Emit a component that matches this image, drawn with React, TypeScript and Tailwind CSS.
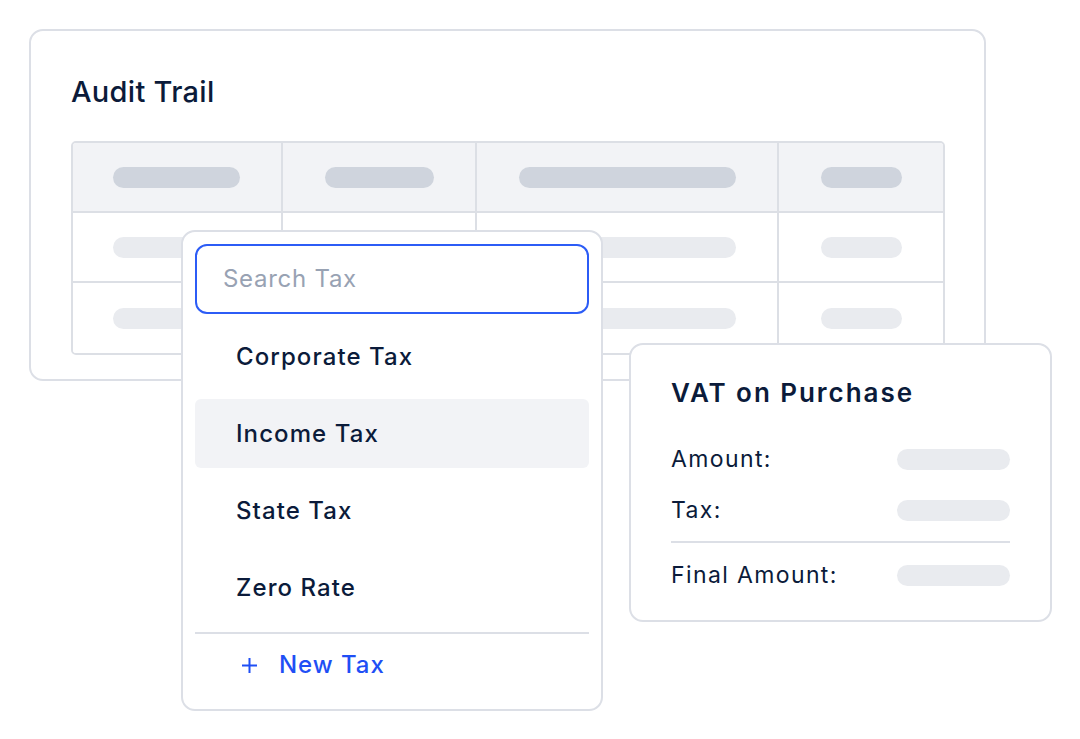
import React from "react";

const font = { fontFamily: "Inter, 'Noto Sans', sans-serif" };

function Pill({ w, dark }: { w: string; dark?: boolean }) {
  return <div className={`h-[21px] rounded-full ${w} ${dark ? "bg-[#cfd4dd]" : "bg-[#e9ebef]"}`} />;
}

function TableRow({ header, last }: { header?: boolean; last?: boolean }) {
  const rowCls = `flex h-[70px] ${header ? "bg-[#f2f3f6]" : "bg-white"} ${last ? "" : "border-b-2 border-[#dcdfe5]"}`;
  return (
    <div className={rowCls}>
      <div className="flex w-[210px] shrink-0 items-center border-r-2 border-[#dcdfe5] pl-[40px]">
        <Pill w="w-[127px]" dark={header} />
      </div>
      <div className="flex w-[194px] shrink-0 items-center border-r-2 border-[#dcdfe5] pl-[42px]">
        <Pill w="w-[109px]" dark={header} />
      </div>
      <div className="flex w-[302px] shrink-0 items-center border-r-2 border-[#dcdfe5] pl-[42px]">
        <Pill w="w-[217px]" dark={header} />
      </div>
      <div className="flex flex-1 items-center pl-[42px]">
        <Pill w="w-[81px]" dark={header} />
      </div>
    </div>
  );
}

export default function App() {
  return (
    <div className="relative h-[739px] w-[1080px] overflow-hidden bg-white text-[#0b1b3a]" style={font}>
      {/* Audit Trail card */}
      <div className="absolute left-[29px] top-[29px] flex h-[352px] w-[957px] flex-col rounded-[14px] border-2 border-[#dcdfe6] bg-white px-[40px] pt-[43px]">
        <h2 className="text-[29px] font-medium leading-[36px] tracking-[0.01em]">Audit Trail</h2>
        <div className="mt-[31px] w-[874px] overflow-hidden rounded-[5px] border-2 border-[#dcdfe5]">
          <TableRow header />
          <TableRow />
          <TableRow last />
        </div>
      </div>

      {/* Tax dropdown */}
      <div className="absolute left-[181px] top-[230px] z-10 flex w-[422px] flex-col rounded-[14px] border-2 border-[#dcdfe6] bg-white px-[12px] pb-[13px] pt-[12px]">
        <div className="flex flex-col gap-[8px]">
          <div className="flex h-[70px] items-center rounded-[12px] border-2 border-[#2c5cf6] px-[26px]">
            <span className="text-[24px] leading-none tracking-[0.03em] text-[#98a2b3]">Search Tax</span>
          </div>
          {["Corporate Tax", "Income Tax", "State Tax", "Zero Rate"].map((t) => (
            <div
              key={t}
              className={`flex h-[69px] items-center rounded-[6px] pl-[41px] ${t === "Income Tax" ? "bg-[#f2f3f6]" : ""}`}
            >
              <span className="pt-[1px] text-[24px] font-medium leading-none tracking-[0.045em]">{t}</span>
            </div>
          ))}
        </div>
        <div className="mt-[10px] h-[2px] bg-[#dcdfe6]" />
        <div className="flex h-[62px] items-center gap-[22px] pl-[47px] text-[#1f4ff5]">
          <svg width="15" height="15" viewBox="0 0 15 15" fill="none" stroke="currentColor" strokeWidth="2">
            <path d="M7.5 0v15M0 7.5h15" />
          </svg>
          <span className="text-[24px] font-medium leading-none tracking-[0.04em]">New Tax</span>
        </div>
      </div>

      {/* VAT card */}
      <div className="absolute left-[629px] top-[343px] z-20 flex h-[279px] w-[423px] flex-col rounded-[14px] border-2 border-[#dcdfe6] bg-white px-[40px] pt-[33px]">
        <h3 className="text-[26px] font-semibold leading-[30px] tracking-[0.075em]">VAT on Purchase</h3>
        <div className="mt-[36px] flex h-[30px] items-center justify-between">
          <span className="text-[23px] leading-none tracking-[0.06em]">Amount:</span>
          <Pill w="w-[113px]" />
        </div>
        <div className="mt-[21px] flex h-[30px] items-center justify-between">
          <span className="text-[23px] leading-none tracking-[0.06em]">Tax:</span>
          <Pill w="w-[113px]" />
        </div>
        <div className="mt-[16px] h-[2px] bg-[#dcdfe6]" />
        <div className="mt-[17px] flex h-[30px] items-center justify-between">
          <span className="text-[23px] leading-none tracking-[0.06em]">Final Amount:</span>
          <Pill w="w-[113px]" />
        </div>
      </div>
    </div>
  );
}
